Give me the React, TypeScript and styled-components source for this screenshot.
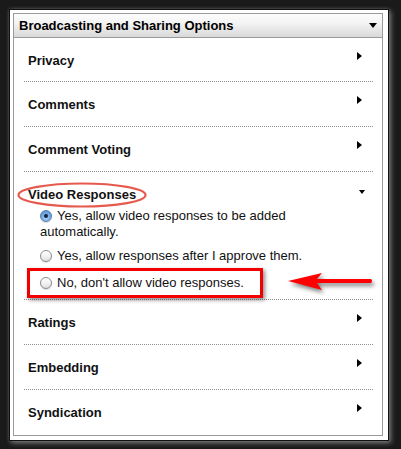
import React from "react";
import styled, { createGlobalStyle } from "styled-components";

const Global = createGlobalStyle`
  html, body { margin: 0; padding: 0; background: #1a1a1a; }
  body { font-family: "Liberation Sans", Arial, Helvetica, sans-serif; }
`;

const Stage = styled.div`
  width: 401px;
  height: 449px;
  padding: 9px;
  box-sizing: border-box;
  background: #1a1a1a;
`;

const Frame = styled.div`
  width: 380px;
  height: 432px;
  box-sizing: border-box;
  background: #fff;
  border: 1px solid #111;
  padding: 3px 5px 4px 3px;
  box-shadow: 2px 2px 5px rgba(150, 150, 150, 0.75), 0 0 3px rgba(110, 110, 110, 0.6);
`;

const Panel = styled.div`
  position: relative;
  width: 370px;
  height: 423px;
  box-sizing: border-box;
  border: 1px solid #9a9a9a;
  background: #fff;
`;

const Header = styled.div`
  height: 23px;
  border-bottom: 1px solid #9a9a9a;
  background: linear-gradient(#fdfdfd, #f3f3f3 40%, #d9d9d9);
  display: flex;
  align-items: center;
  justify-content: space-between;
  padding: 0 5px 0 5px;
  font-size: 13px;
  font-weight: bold;
  color: #000;
`;

const HeaderTitle = styled.span`
  line-height: 16px;
  margin-top: 1px;
`;

const DownTriangle = styled.span<{ $w: number; $h: number }>`
  display: block;
  width: 0;
  height: 0;
  border-left: ${(p) => p.$w / 2}px solid transparent;
  border-right: ${(p) => p.$w / 2}px solid transparent;
  border-top: ${(p) => p.$h}px solid #000;
`;

const RightTriangle = styled.span`
  display: block;
  width: 0;
  height: 0;
  border-top: 4.5px solid transparent;
  border-bottom: 4.5px solid transparent;
  border-left: 5px solid #000;
`;

const List = styled.div`
  margin: 0 9px 0 10px;
`;

const Row = styled.div<{ $h: number; $last?: boolean }>`
  height: ${(p) => p.$h}px;
  box-sizing: border-box;
  border-bottom: ${(p) => (p.$last ? "none" : "1px dotted #8f8f8f")};
  display: flex;
  align-items: flex-start;
  justify-content: space-between;
  padding: 15px 9px 0 4px;
`;

const RowTitle = styled.span`
  font-size: 13px;
  font-weight: bold;
  line-height: 16px;
  color: #111;
`;

const IconBox = styled.span<{ $top: number }>`
  width: 7px;
  margin-top: ${(p) => p.$top}px;
  display: flex;
`;

const Expanded = styled.div`
  position: relative;
  border-bottom: 1px dotted #8f8f8f;
  padding: 15px 0 8px 0;
`;

const ExpandedHead = styled.div`
  display: flex;
  justify-content: space-between;
  align-items: flex-start;
  padding: 0 7px 0 4px;
`;

const Options = styled.div`
  display: flex;
  flex-direction: column;
  padding: 0 7px 0 16px;
  margin-top: 5px;
`;

const Option = styled.div<{ $gap: number }>`
  font-size: 13px;
  line-height: 16px;
  color: #111;
  margin-top: ${(p) => p.$gap}px;
`;

const Radio = styled.span<{ $on?: boolean }>`
  display: inline-block;
  position: relative;
  width: 12px;
  height: 12px;
  box-sizing: border-box;
  border-radius: 50%;
  margin-right: 5px;
  vertical-align: -2px;
  border: 1px solid ${(p) => (p.$on ? "#5a7ea8" : "#8c8c8c")};
  background: ${(p) =>
    p.$on
      ? "radial-gradient(circle at 50% 70%, #a9d0f7 0%, #6ea7e4 55%, #4f8bd0 100%)"
      : "linear-gradient(#ffffff, #f2f2f2 50%, #dedede)"};
  box-shadow: 0 1px 1px rgba(0, 0, 0, 0.15);
  &::after {
    content: "";
    display: ${(p) => (p.$on ? "block" : "none")};
    position: absolute;
    left: 3px;
    top: 3px;
    width: 4px;
    height: 4px;
    border-radius: 50%;
    background: #16243a;
  }
`;

const Oval = styled.svg`
  position: absolute;
  left: -7px;
  top: 10px;
  width: 130px;
  height: 26px;
  overflow: visible;
`;

const Highlight = styled.div`
  position: absolute;
  left: 3px;
  top: 96px;
  width: 236px;
  height: 30px;
  box-sizing: border-box;
  border: 3px solid #f20000;
  box-shadow: 2px 2px 4px rgba(0, 0, 0, 0.45);
  pointer-events: none;
`;

const Arrow = styled.svg`
  position: absolute;
  left: 261px;
  top: 97px;
  width: 90px;
  height: 26px;
  overflow: visible;
  filter: drop-shadow(2px 3px 2px rgba(0, 0, 0, 0.5));
`;

const rows = ["Privacy", "Comments", "Comment Voting"];
const after = ["Ratings", "Embedding", "Syndication"];

export default function App() {
  return (
    <>
      <Global />
      <Stage>
        <Frame>
          <Panel>
            <Header>
              <HeaderTitle>Broadcasting and Sharing Options</HeaderTitle>
              <DownTriangle $w={9} $h={5} />
            </Header>
            <List>
              {rows.map((r, i) => (
                <Row key={r} $h={i === 0 ? 44 : 45}>
                  <RowTitle>{r}</RowTitle>
                  <IconBox $top={-1}>
                    <RightTriangle />
                  </IconBox>
                </Row>
              ))}
              <Expanded>
                <ExpandedHead>
                  <RowTitle>Video Responses</RowTitle>
                  <IconBox $top={3}>
                    <DownTriangle $w={7} $h={4} />
                  </IconBox>
                </ExpandedHead>
                <Options>
                  <Option $gap={0}>
                    <Radio $on />
                    Yes, allow video responses to be added automatically.
                  </Option>
                  <Option $gap={8}>
                    <Radio />
                    Yes, allow responses after I approve them.
                  </Option>
                  <Option $gap={11}>
                    <Radio />
                    No, don't allow video responses.
                  </Option>
                </Options>
                <Oval viewBox="0 0 130 26">
                  <ellipse cx="65" cy="13" rx="63.5" ry="11.5" fill="none" stroke="#e65a4e" strokeWidth="2.2" />
                </Oval>
                <Highlight />
                <Arrow viewBox="0 0 90 26">
                  <path
                    d="M3 12 L37 4 L32 10 L86 10 Q88 12 86 14 L32 14 L37 21 Z"
                    fill="#ff0000"
                  />
                </Arrow>
              </Expanded>
              {after.map((r, i) => (
                <Row key={r} $h={45} $last={i === after.length - 1}>
                  <RowTitle>{r}</RowTitle>
                  <IconBox $top={-1}>
                    <RightTriangle />
                  </IconBox>
                </Row>
              ))}
            </List>
          </Panel>
        </Frame>
      </Stage>
    </>
  );
}
